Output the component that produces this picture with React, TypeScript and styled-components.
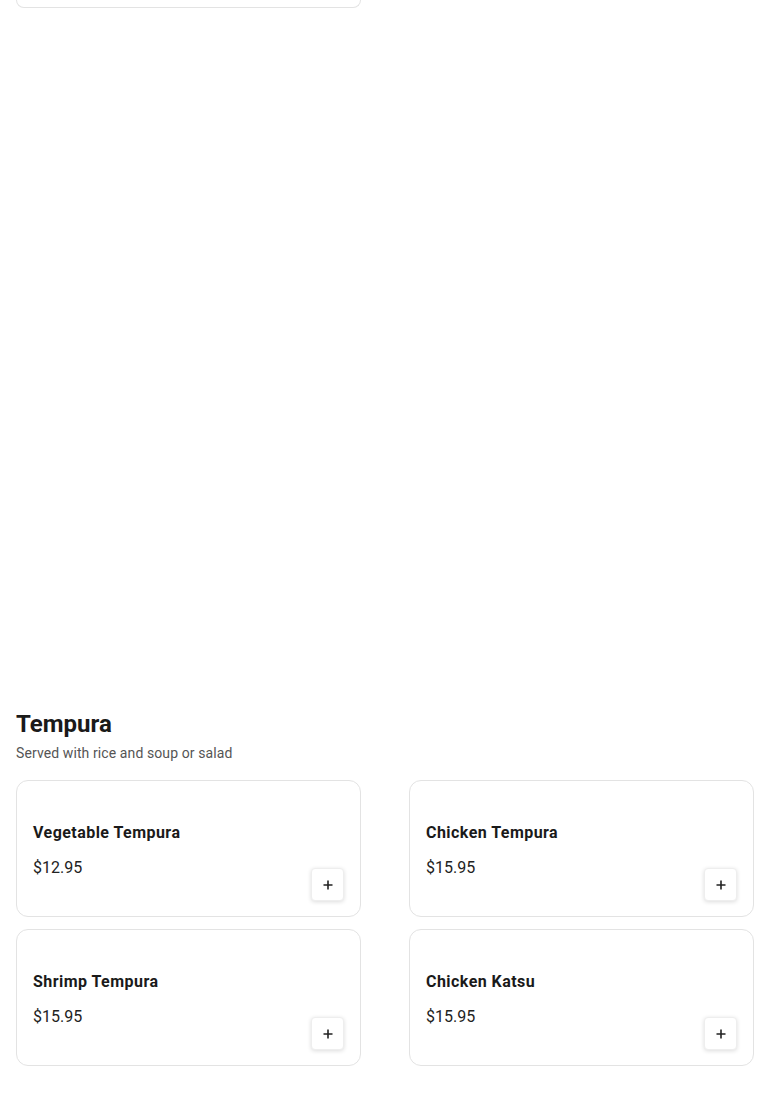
import React from "react";
import styled, { createGlobalStyle } from "styled-components";

const Global = createGlobalStyle`
  html, body { margin: 0; padding: 0; background: #fff; }
  body { font-family: Roboto, "Noto Sans", Arial, sans-serif; color: #1a1a1a; }
  * { box-sizing: border-box; }
`;

const Page = styled.div`
  padding: 0 16px;
  width: 770px;
`;

const Columns = styled.div`
  display: grid;
  grid-template-columns: 345px 345px;
  column-gap: 48px;
  row-gap: 12px;
`;

const CardTail = styled.div`
  height: 8px;
  border: 1px solid #e3e3e3;
  border-top: none;
  border-radius: 0 0 12px 12px;
`;

const Section = styled.section`
  margin-top: 700px;
`;

const Title = styled.h2`
  margin: 0;
  font-size: 24px;
  line-height: 32px;
  font-weight: 700;
  color: #1a1a1a;
`;

const Subtitle = styled.p`
  margin: 3px 0 17px;
  font-size: 14px;
  line-height: 20px;
  letter-spacing: 0.1px;
  color: #555;
`;

const Card = styled.div`
  height: 137px;
  border: 1px solid #e3e3e3;
  border-radius: 12px;
  padding: 16px;
  display: flex;
  justify-content: space-between;
  align-items: flex-end;
`;

const Info = styled.div`
  display: flex;
  flex-direction: column;
  align-self: stretch;
  padding-top: 24px;
`;

const Name = styled.div`
  font-size: 16px;
  line-height: 24px;
  font-weight: 700;
  letter-spacing: 0.45px;
  color: #1a1a1a;
`;

const Price = styled.div`
  margin-top: 11px;
  font-size: 16px;
  line-height: 24px;
  color: #222;
`;

const AddButton = styled.button`
  width: 33px;
  height: 33px;
  margin-bottom: -1px;
  border: 1px solid #eee;
  border-radius: 4px;
  background: #fff;
  box-shadow: 0 1px 4px rgba(0, 0, 0, 0.14);
  display: flex;
  align-items: center;
  justify-content: center;
  padding: 0;
  cursor: pointer;
`;

const items = [
  { name: "Vegetable Tempura", price: "$12.95" },
  { name: "Chicken Tempura", price: "$15.95" },
  { name: "Shrimp Tempura", price: "$15.95" },
  { name: "Chicken Katsu", price: "$15.95" },
];

const Plus = () => (
  <svg width="12" height="12" viewBox="0 0 12 12" fill="none">
    <path d="M6 1.5v9M1.5 6h9" stroke="#222" strokeWidth="1.6" />
  </svg>
);

export default function App() {
  return (
    <>
      <Global />
      <Page>
        <Columns>
          <CardTail />
        </Columns>
        <Section>
          <Title>Tempura</Title>
          <Subtitle>Served with rice and soup or salad</Subtitle>
          <Columns>
            {items.map((it) => (
              <Card key={it.name}>
                <Info>
                  <Name>{it.name}</Name>
                  <Price>{it.price}</Price>
                </Info>
                <AddButton aria-label={`Add ${it.name}`}>
                  <Plus />
                </AddButton>
              </Card>
            ))}
          </Columns>
        </Section>
      </Page>
    </>
  );
}
